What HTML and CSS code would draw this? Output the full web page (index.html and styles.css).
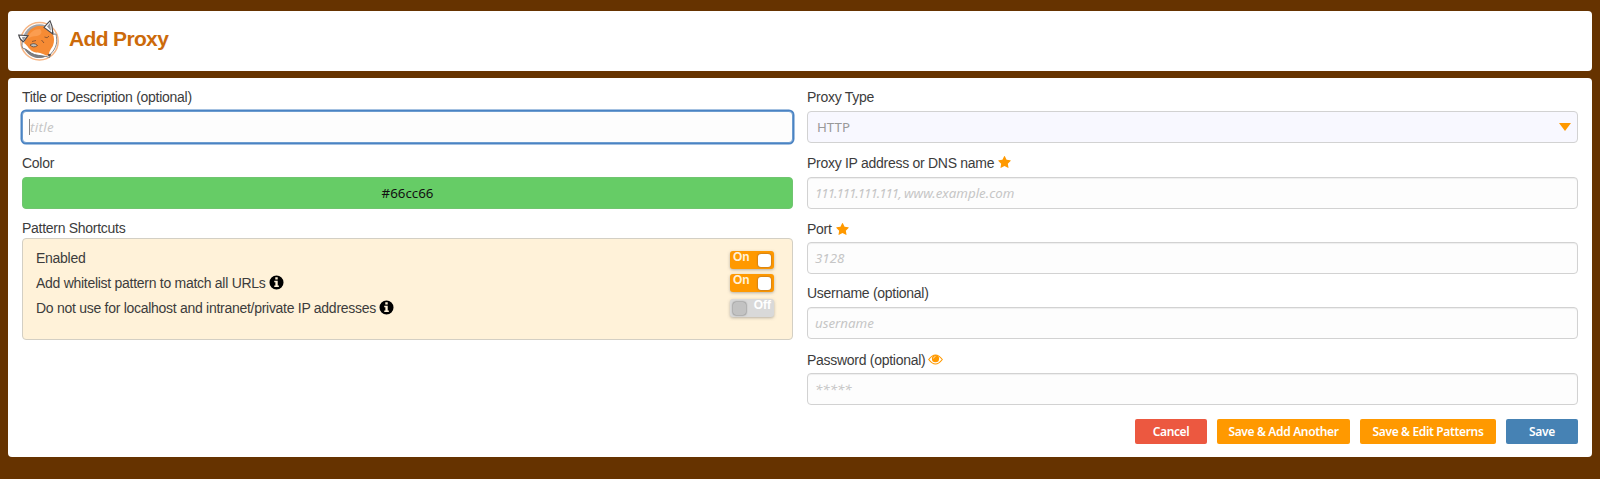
FILE: index.html
```
<!DOCTYPE html>
<html lang="en">
<head>
<meta charset="utf-8">
<title>Add Proxy</title>
<link rel="stylesheet" href="styles.css">
</head>
<body>
<svg class="defs" width="0" height="0">
  <symbol id="star" viewBox="0 0 1664 1600"><path d="M1664 615q0 22-26 48l-363 354 86 500q1 7 1 20 0 21-10.500 35.500t-30.500 14.500q-19 0-40-12l-449-236-449 236q-22 12-40 12-21 0-31.500-14.500t-10.500-35.500q0-6 2-20l86-500-364-354q-25-27-25-48 0-37 56-46l502-73 225-455q19-41 49-41t49 41l225 455 502 73q56 9 56 46z"/></symbol>
  <symbol id="info" viewBox="0 0 16 16"><path fill-rule="evenodd" d="M8 .5a7.500 7.500 0 1 0 0 15 7.500 7.500 0 0 0 0-15ZM6.700 2.500h2.600v2.300H6.700ZM5.600 6.100h3.700v5.100h1.200v1.700H5.600v-1.700h1.200V7.800H5.600Z"/></symbol>
</svg>
<header class="header">
  <svg class="logo" viewBox="0 0 42 42">
    <circle cx="21.500" cy="21.300" r="18.700" fill="#fff" stroke="#f6b584" stroke-width="1.500"/>
    <circle cx="21.500" cy="21" r="16.700" fill="#a2a3a7"/>
    <path d="M6 28a16.700 16.700 0 0 0 25 7l-6-3Z" fill="#7d7e82"/>
    <path d="M6 18C4 21 3.500 25 4.500 28c5 1 7 5 12 6.500 5 1.500 10 1 15 3 .5-4 3-5 5-8.500 2-4 3-7 1.500-15Z" fill="#fff" stroke="#68686b" stroke-width=".8"/>
    <path d="M6 23 9 15C10.500 11 13.500 8 18 6.500c3-.7 6-.5 9 0l7.500 7c2 4 2 8 .5 12-1.500 3.500-4 5-4 9.500-2 1.300-4 0-6-1-4-2-7-.5-11-3-3-2-4-5-8-8Z" fill="#f68b34"/>
    <path d="M9 19c3-7 7-10 13-10 3 3 1 6-3 7-4 0-7 1-10 3Z" fill="#fb9d50"/>
    <path d="m.7 15 9.300.7-4.500 6C3 20.500 1.500 18 .7 15ZM26 7.500C28 5 30 3 32 .8c2 4 3 8 2.500 13Z" fill="#fff" stroke="#48484c" stroke-width="1.100"/>
    <path d="M4 17l4-.3-3 4Zm25-10.500 3-3.500 1 8Z" fill="#97979b"/>
    <path d="M12 25q4-3 7.500.5-4 3-7.500-.5Z" fill="#b9c3c6" stroke="#65412b" stroke-width=".8"/>
    <path d="M26.500 17q3 2 4.500-1M14 21.500l4-1M23.500 20l2.500 3" fill="none" stroke="#83502f" stroke-width=".9"/>
    <path d="M29.500 34.500q2.500-1 3.500-.5-.5 2.500-2 2.500-1-.5-1.500-2Z" fill="#565255"/>
  </svg>
  <h1 class="heading">Add Proxy</h1>
</header>
<main class="panel">
  <div class="columns">
    <section class="column">
      <label class="label" for="title"><span>Title or Description (optional)</span></label>
      <div class="field focused" id="title"><i class="caret"></i><span class="hint">title</span></div>
      <div class="label"><span>Color</span></div>
      <div class="field color">#66cc66</div>
      <div class="label"><span>Pattern Shortcuts</span></div>
      <div class="shortcuts">
        <div class="option first"><span>Enabled</span><div class="switch">On<i class="knob"></i></div></div>
        <div class="option second"><span>Add whitelist pattern to match all URLs</span><svg class="info"><use href="#info"/></svg><div class="switch">On<i class="knob"></i></div></div>
        <div class="option third"><span>Do not use for localhost and intranet/private IP addresses</span><svg class="info"><use href="#info"/></svg><div class="switch off"><i class="knob"></i>Off</div></div>
      </div>
    </section>
    <section class="column">
      <div class="label"><span>Proxy Type</span></div>
      <div class="field select"><span>HTTP</span><i class="arrow"></i></div>
      <div class="label"><span>Proxy IP address or DNS name</span><svg class="star"><use href="#star"/></svg></div>
      <div class="field"><span class="hint"><span class="address">111.111.111.111,</span> www.example.com</span></div>
      <div class="label low"><span>Port</span><svg class="star"><use href="#star"/></svg></div>
      <div class="field"><span class="hint">3128</span></div>
      <div class="label"><span>Username (optional)</span></div>
      <div class="field"><span class="hint">username</span></div>
      <div class="label low"><span>Password (optional)</span><svg class="eye" viewBox="0 0 15 11"><path d="M.7 5.500Q7.500-3.500 14.300 5.500 7.500 14.500 .7 5.500Z" fill="none" stroke="currentColor" stroke-width="1.100"/><circle cx="7.500" cy="4.700" r="3.600"/><path d="M5.500 4.500q.1-2 2-2" fill="none" stroke="#fff" stroke-width=".6"/></svg></div>
      <div class="field"><span class="hint">*****</span></div>
    </section>
  </div>
  <div class="actions">
    <button class="button cancel">Cancel</button>
    <button class="button another">Save &amp; Add Another</button>
    <button class="button patterns">Save &amp; Edit Patterns</button>
    <button class="button save">Save</button>
  </div>
</main>
</body>
</html>
```
FILE: styles.css
```
* { box-sizing: border-box; }
body {
  margin: 0;
  height: 479px;
  padding: 11px 8px 0;
  background: #663300;
  color: #3c3c3c;
  font: 14px/18px "Liberation Sans", Arial, sans-serif;
  letter-spacing: -.28px;
}
.defs { display: none; }
.header {
  display: flex;
  align-items: center;
  height: 60px;
  padding: 0 10px;
  border-radius: 4px;
  background: #fff;
}
.logo { width: 42px; height: 42px; }
.heading {
  margin: -4px 0 0 9px;
  color: #cc6a0a;
  font-size: 21px;
  line-height: 28px;
  letter-spacing: -.65px;
}
.panel {
  height: 379px;
  margin-top: 7px;
  padding: 8px 14px 0;
  border-radius: 4px;
  background: #fff;
}
.columns { display: grid; grid-template-columns: 771px 771px; gap: 14px; }
.column {
  display: grid;
  grid-template-rows: 25px 32px 34px 32px 33px 32px 33px 32px 34px 32px;
}
.label { display: flex; align-items: center; padding-bottom: 3px; white-space: nowrap; }
.label:nth-child(n+3) { padding: 5px 0 0; }
.label.low { padding-top: 7px; }
.field {
  display: flex;
  align-items: center;
  border: 1px solid #d2d2d2;
  border-radius: 4px;
  background: #fdfdfd;
  box-shadow: inset 0 1px 1px #eee;
  padding: 0 7px;
  font: 13.300px/18px "Noto Sans", sans-serif;
  letter-spacing: 0;
}
.hint { color: #c6c6c6; font-style: italic; }
.address { letter-spacing: -1px; }
.focused { padding-left: 6px; border-color: #6c9ccf; box-shadow: 0 0 0 1.500px #4a83c3; }
.focused .hint { letter-spacing: .3px; }
.caret { width: 1px; height: 16px; background: #888; }
.color { justify-content: center; background: #66cc66; border-color: #70c570; color: #111; box-shadow: none; }
.select { justify-content: space-between; padding: 0 6px 0 9px; background: #f8f8ff; color: #999; box-shadow: none; }
.arrow { border: 6px solid transparent; border-top: 8px solid #ff9900; border-bottom: 0; }
.star { width: 13px; height: 12px; margin: -1px 0 0 4px; fill: #ff9900; }
.eye { width: 15px; height: 11px; margin-left: 3px; fill: #ff9900; color: #ff9900; }
.shortcuts {
  height: 102px;
  margin-top: -4px;
  padding: 6px 18px 0 13px;
  border: 1px solid #d3cfc4;
  border-radius: 4px;
  background: #fff2d9;
}
.option { display: flex; align-items: center; height: 25px; }
.third { height: 26px; }
.info { width: 15px; height: 15px; margin: -1px 0 0 3px; fill: #000; }
.switch {
  display: flex;
  justify-content: space-between;
  width: 44px;
  height: 18px;
  margin-left: auto;
  padding: 2px 3px;
  border-radius: 3px;
  background: #ff9900;
  color: #fff2d9;
  box-shadow: 0 1px 3px #7778;
  font: bold 12px/9px "Liberation Sans", sans-serif;
  letter-spacing: 0;
}
.first .switch { margin-top: 5px; }
.knob { width: 13px; height: 13px; margin-top: 1px; border-radius: 3px; background: #fff; box-shadow: 0 0 2px #754; }
.off { background: #d9d9d9; color: #fff; }
.off .knob { background: #c2c2c2; box-shadow: 0 0 2px #444; }
.actions { display: flex; justify-content: flex-end; gap: 10px; margin-top: 14px; }
.button {
  height: 25px;
  padding: 0;
  border: 0;
  border-radius: 2px;
  background: #ff9900;
  color: #fff;
  font: 600 12px/25px "Noto Sans", sans-serif;
  letter-spacing: -.35px;
}
.cancel { width: 72px; background: #ec5840; }
.another { width: 133px; }
.patterns { width: 136px; }
.save { width: 72px; background: #4682b4; }
```
